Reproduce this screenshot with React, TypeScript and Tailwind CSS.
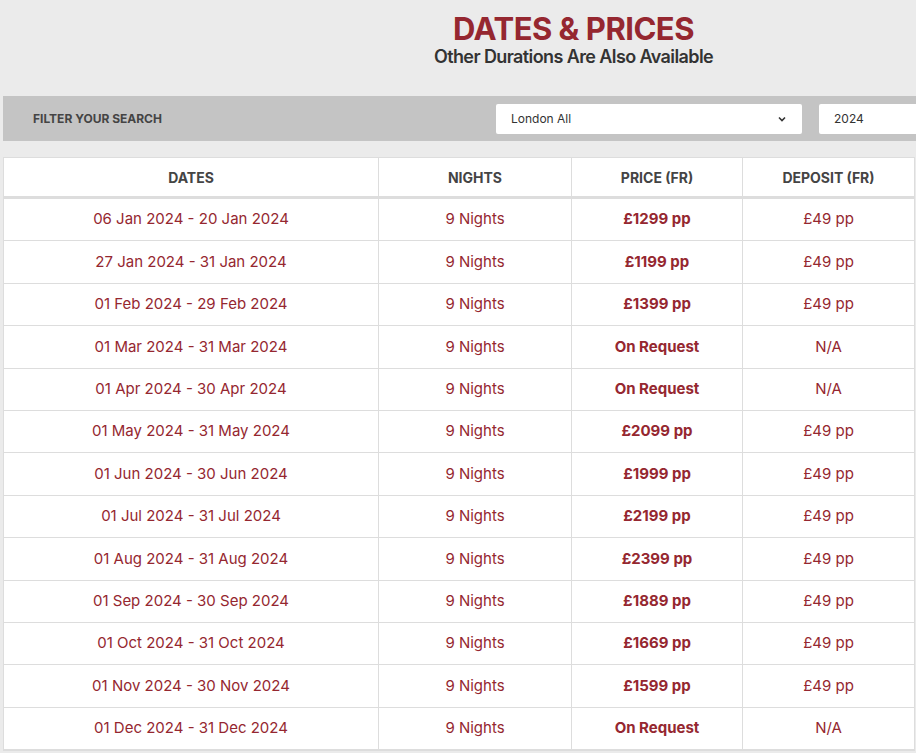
const rows: [string, string, string][] = [
  ["06 Jan 2024 - 20 Jan 2024", "£1299 pp", "£49 pp"],
  ["27 Jan 2024 - 31 Jan 2024", "£1199 pp", "£49 pp"],
  ["01 Feb 2024 - 29 Feb 2024", "£1399 pp", "£49 pp"],
  ["01 Mar 2024 - 31 Mar 2024", "On Request", "N/A"],
  ["01 Apr 2024 - 30 Apr 2024", "On Request", "N/A"],
  ["01 May 2024 - 31 May 2024", "£2099 pp", "£49 pp"],
  ["01 Jun 2024 - 30 Jun 2024", "£1999 pp", "£49 pp"],
  ["01 Jul 2024 - 31 Jul 2024", "£2199 pp", "£49 pp"],
  ["01 Aug 2024 - 31 Aug 2024", "£2399 pp", "£49 pp"],
  ["01 Sep 2024 - 30 Sep 2024", "£1889 pp", "£49 pp"],
  ["01 Oct 2024 - 31 Oct 2024", "£1669 pp", "£49 pp"],
  ["01 Nov 2024 - 30 Nov 2024", "£1599 pp", "£49 pp"],
  ["01 Dec 2024 - 31 Dec 2024", "On Request", "N/A"],
];

export default function App() {
  return (
    <div className="w-[916px] h-[753px] overflow-hidden bg-[#ebebeb]" style={{ fontFamily: "Inter, 'Open Sans', sans-serif" }}>
      <div className="w-[1141px] ml-[3px]">
        <div className="flex flex-col items-center pt-[11px] h-[96px]">
          <div className="text-[31px] leading-[36px] font-bold text-[#952730] tracking-[-0.5px]">DATES &amp; PRICES</div>
          <div className="text-[18px] leading-[20px] font-semibold text-[#333] tracking-[-0.6px]">Other Durations Are Also Available</div>
        </div>
        <div className="h-[45px] bg-[#c4c4c4] flex items-center">
          <div className="w-[493px] pl-[30px] text-[12px] font-bold text-[#444]">FILTER YOUR SEARCH</div>
          <div className="w-[306px] h-[30px] bg-white rounded-[2px] flex items-center justify-between px-[15px] text-[12px] text-[#333]">
            <span>London All</span>
            <svg width="10" height="10" viewBox="0 0 10 10"><path d="M2 3.5 L5 6.5 L8 3.5" fill="none" stroke="#333" strokeWidth="1.6" /></svg>
          </div>
          <div className="ml-[17px] w-[200px] h-[30px] bg-white rounded-[2px] flex items-center px-[15px] text-[12px] text-[#333]">2024</div>
        </div>
        <div className="mt-[16px] w-[912px] bg-white border border-[#ddd]">
          <div className="flex h-[41px] border-b-[3px] border-[#ddd] text-[14px] font-bold text-[#444]">
            <div className="w-[375px] border-r border-[#ddd] flex items-center justify-center">DATES</div>
            <div className="w-[193px] border-r border-[#ddd] flex items-center justify-center">NIGHTS</div>
            <div className="w-[171px] border-r border-[#ddd] flex items-center justify-center">PRICE (FR)</div>
            <div className="flex-1 flex items-center justify-center">DEPOSIT (FR)</div>
          </div>
          {rows.map(([d, p, dep], i) => (
            <div key={i} className="flex h-[42.4px] border-b border-[#ddd] text-[15px] text-[#952730]">
              <div className="w-[375px] border-r border-[#ddd] flex items-center justify-center">{d}</div>
              <div className="w-[193px] border-r border-[#ddd] flex items-center justify-center">9 Nights</div>
              <div className="w-[171px] border-r border-[#ddd] flex items-center justify-center font-bold">{p}</div>
              <div className="flex-1 flex items-center justify-center">{dep}</div>
            </div>
          ))}
        </div>
      </div>
    </div>
  );
}
